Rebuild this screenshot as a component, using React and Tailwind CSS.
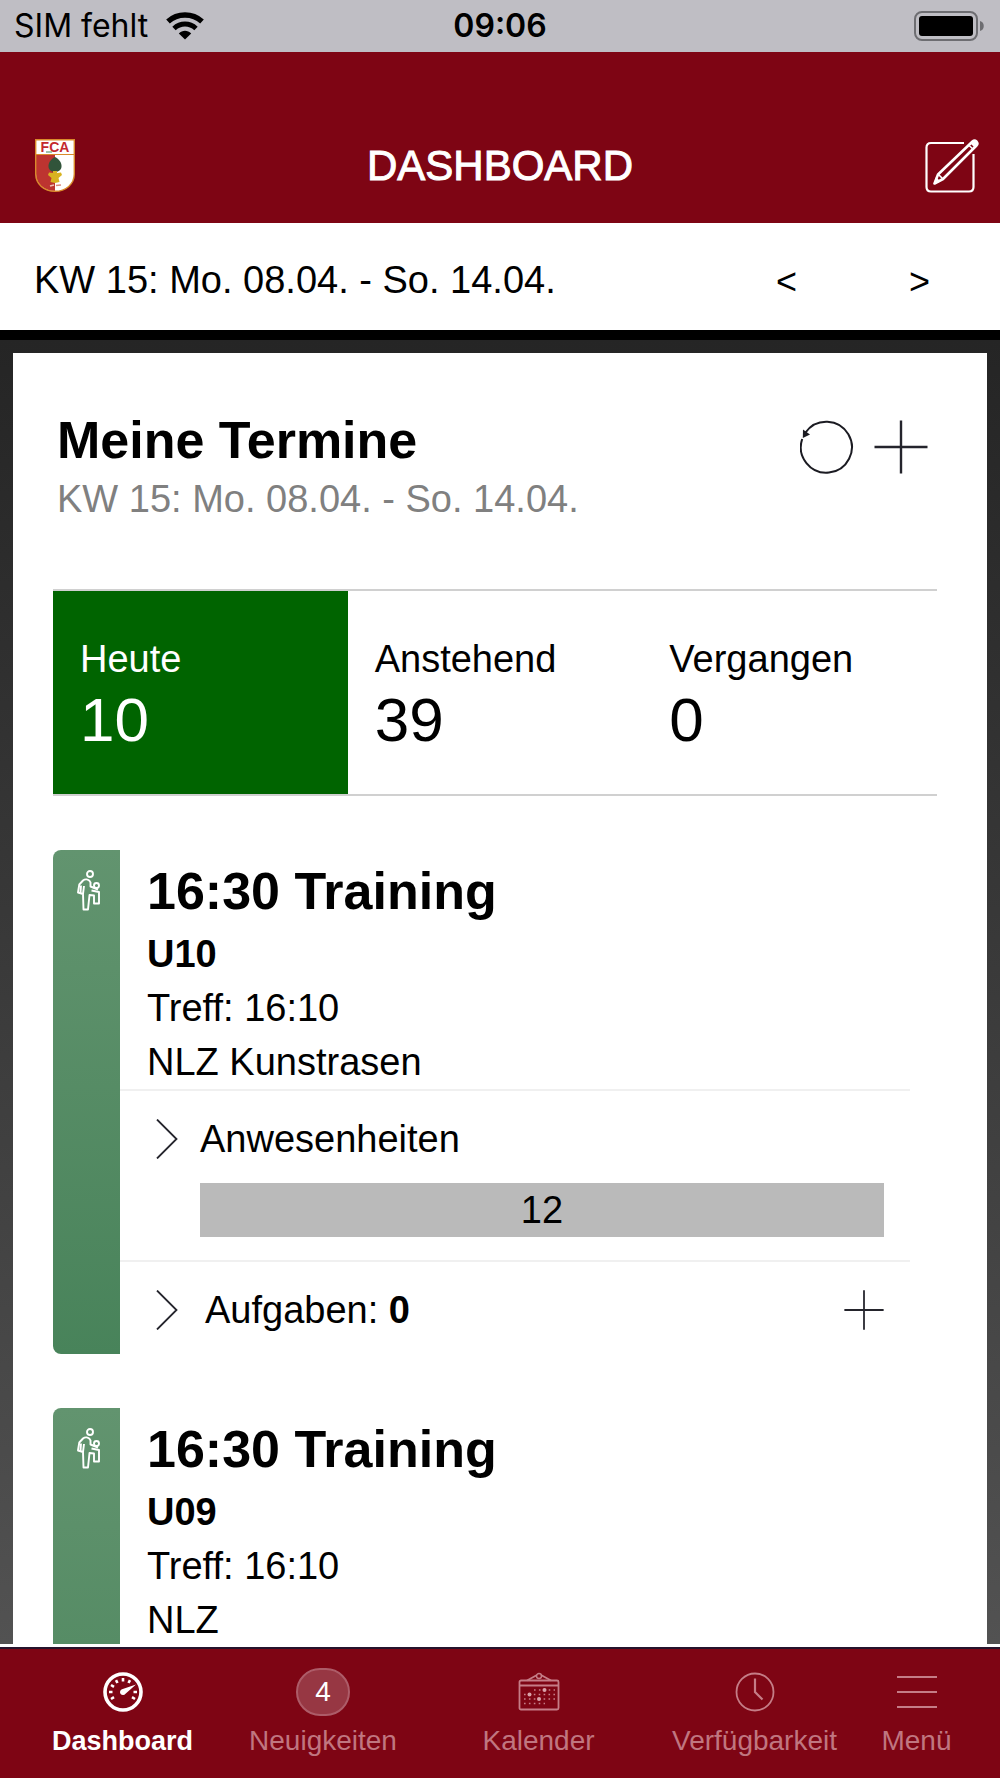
import React, { useState } from 'react'

const WEEK = 'KW 15: Mo. 08.04. - So. 14.04.'

const TABS = [
  { label: 'Heute', count: 10 },
  { label: 'Anstehend', count: 39 },
  { label: 'Vergangen', count: 0 },
]

const EVENTS = [
  { id: 1, title: '16:30 Training', team: 'U10', meet: 'Treff: 16:10', place: 'NLZ Kunstrasen', attendance: 12, tasks: 0 },
  { id: 2, title: '16:30 Training', team: 'U09', meet: 'Treff: 16:10', place: 'NLZ' },
]

function WifiIcon(){
  return (
    <svg viewBox="0 0 38 28" className="w-[38px] h-7" fill="none" stroke="#000" aria-hidden="true">
      <path d="M2 9.500C11.500 .8 26.500 .8 36 9.500" strokeWidth="5.400" />
      <path d="M8 16.500C14.500 10.600 23.500 10.600 30 16.500" strokeWidth="5" />
      <path d="M12.800 21.500C16.500 17.800 21.500 17.800 25.200 21.500L19 27.500Z" fill="#000" stroke="none" />
    </svg>
  )
}

function BatteryIcon(){
  return (
    <svg viewBox="0 0 72 30" className="w-[72px] h-[30px]" aria-hidden="true">
      <rect x="1" y="1" width="62" height="28" rx="7" fill="none" stroke="#6d6d71" strokeWidth="2" />
      <rect x="5" y="5" width="54" height="20" rx="3" fill="#000" />
      <path d="M66 10C71 11 71 19 66 20Z" fill="#6d6d71" />
    </svg>
  )
}

function ClubLogo(){
  return (
    <svg viewBox="0 0 40 53" className="w-10 h-[53px]" role="img" aria-label="FCA">
      <path d="M.7.7H39.300V35C39.300 45 31 52.300 20 52.300S.7 45 .7 35Z" fill="#fff" />
      <path d="M1 16H20V52C9 52 1 45 1 35Z" fill="#bd3430" />
      <path d="M.7.7H39.300V35C39.300 45 31 52.300 20 52.300S.7 45 .7 35Z" fill="none" stroke="#d98a2b" strokeWidth="1.400" />
      <path d="M1 15.500H39" stroke="#d98a2b" strokeWidth="1.200" />
      <text x="20" y="13.200" textAnchor="middle" fontFamily="Liberation Sans, sans-serif" fontWeight="700" fontSize="14" fill="#c42a2e">FCA</text>
      <path d="M11 13H17" stroke="#3d8a5c" strokeWidth="1" />
      <path d="M20 18C24 20 27 24 26.500 28C26 31.500 23 33 20 33S14 31.500 13.500 28C13 24 16 20 20 18Z" fill="#31543a" />
      <path d="M18 32H22V34L26 33.500L27 36L23.500 39L24.500 43L20 44L15.500 43L16.500 39L13 36L14 33.500L18 34Z" fill="#d8b321" />
      <path d="M15 47L19 46" stroke="#f0c0b8" strokeWidth="1.500" />
      <path d="M21 46.500L26 46" stroke="#d98a7b" strokeWidth="1.500" />
    </svg>
  )
}

function EditIcon(){
  return (
    <svg viewBox="0 0 54 54" className="w-[54px] h-[54px]" fill="none" stroke="#fff" strokeWidth="2.200" strokeLinejoin="round" aria-hidden="true">
      <path d="M39 4H6Q1.500 4 1.500 8.500V48Q1.500 52.500 6 52.500H44Q48.500 52.500 48.500 48V15" />
      <path d="M9.500 44.500L13 35.500L47.500 2.500Q49.500.8 51.500 2.500Q53.300 4.500 51.500 6.500L18 40Z" strokeWidth="2.600" />
      <path d="M13.500 35.500L18 40M43.500 6L48.500 10.500" strokeWidth="1.600" />
      <path d="M8.500 45.500L11 38L15.500 42.500Z" fill="#fff" stroke="none" />
      <path d="M45.500 4.500L50 1L53 4L49.500 8.500Z" fill="#fff" stroke="none" />
    </svg>
  )
}

function RefreshIcon(){
  return (
    <svg viewBox="0 0 54 54" className="w-[54px] h-[54px]" aria-hidden="true">
      <path d="M5.500 12.500A25.500 25.500 0 1 1 2.200 19" fill="none" stroke="#1b1b22" strokeWidth="2" />
      <path d="M3 9.500L10 14.500L2.800 18Z" fill="#1b1b22" />
    </svg>
  )
}

function PlusIcon({ className }){
  return (
    <svg viewBox="0 0 54 54" className={className} stroke="#24242c" strokeWidth="2.400" aria-hidden="true">
      <path d="M27 .5V53.500M.5 27H53.500" />
    </svg>
  )
}

function ChevronIcon(){
  return (
    <svg viewBox="0 0 22 40" className="w-[22px] h-10" fill="none" stroke="#24242c" strokeWidth="1.800" aria-hidden="true">
      <path d="M1 .5L20.500 20L1 39.500" />
    </svg>
  )
}

function PlayerIcon(){
  return (
    <svg viewBox="0 0 25 42" className="w-[25px] h-[42px]" fill="none" stroke="#fff" strokeWidth="1.900" strokeLinejoin="round" aria-hidden="true">
      <circle cx="14" cy="5" r="3" />
      <circle cx="20.500" cy="16.500" r="2.500" />
      <path d="M14.500 13C12.500 9.800 9 9.800 7 11.500L3.300 15.500L2 23.500L7 25L7.500 40.500H12L13.500 26L18 26.500V34.500H23V23L15.500 21.500" />
      <path d="M14.500 13L14.500 17.500L22 20.500M5 16.500L4.500 24M8 17L7 25" />
    </svg>
  )
}

function GaugeIcon(){
  return (
    <svg viewBox="0 0 40 40" className="w-10 h-10" fill="none" stroke="#fff" aria-hidden="true">
      <circle cx="20" cy="20" r="18" strokeWidth="3.600" />
      <path d="M20 6V9.500M13 8.200L14.500 11M27 8.200L25.500 11M8 13L11 14.800M6 20H9.500M30.500 20H34M8 27L11 25.200M32 27L29 25.200" strokeWidth="2.600" />
      <path d="M33 12.500L22.500 21.800A3 3 0 1 1 19 17.300Z" fill="#fff" stroke="none" />
    </svg>
  )
}

function CalendarIcon(){
  // [y, start, end] of each dotted row of days
  const rows = [[18, 16, 37], [22.500, 6, 37], [27, 6, 37], [31.500, 6, 27]]
  return (
    <svg viewBox="0 0 42 40" className="w-[42px] h-10" fill="none" stroke="#c57d87" strokeWidth="1.800" aria-hidden="true">
      <rect x="1.500" y="8.500" width="39" height="29" rx="1.500" />
      <path d="M1.500 13.500H40.500M9 8.500L19 3M33 8.500L23 3" />
      <circle cx="21" cy="4" r="2.500" strokeWidth="1.400" />
      {rows.map(([y, from, to])=> (
        <path key={y} d={`M${from} ${y}H${to}`} strokeWidth="1.600" strokeDasharray="1.600 3.300" />
      ))}
      <g fill="#d9a3aa" stroke="none">
        <circle cx="26.500" cy="18" r="2" />
        <circle cx="11.500" cy="22.500" r="2" />
        <circle cx="21" cy="27" r="2" />
      </g>
    </svg>
  )
}

function ClockIcon(){
  return (
    <svg viewBox="0 0 40 40" className="w-10 h-10" fill="none" stroke="#c57d87" strokeWidth="1.800" aria-hidden="true">
      <circle cx="20" cy="20" r="18.500" />
      <path d="M20 6.500V20L27.500 27.500" strokeWidth="2.200" />
    </svg>
  )
}

function MenuIcon(){
  return (
    <svg viewBox="0 0 40 40" className="w-10 h-10" stroke="#c57d87" strokeWidth="2.200" aria-hidden="true">
      <path d="M0 5H40M0 20H40M0 35H40" />
    </svg>
  )
}

function NavItem({ label, active, children }){
  return (
    <a href="#" className="flex flex-col items-center" aria-current={active ? 'page' : undefined}>
      <span className="h-12 flex items-center justify-center">{children}</span>
      <span className={active
        ? 'mt-[7px] text-[27px] leading-9 font-bold text-white'
        : 'mt-[7px] text-[28px] leading-9 text-[#c07680]'}>{label}</span>
    </a>
  )
}

function EventCard({ event }){
  const hasDetails = event.attendance !== undefined
  return (
    <article className="flex shrink-0 min-h-[504px] mr-[27px]">
      <div className="w-[67px] shrink-0 rounded-l-lg bg-linear-to-b from-[#62946f] to-[#48835a] flex justify-center items-start pt-[19px] pl-1">
        <PlayerIcon />
      </div>
      <div className="flex-1 pt-[5px] text-[38px] leading-[54px]">
        <div className="pl-[27px]">
          <h3 className="text-[52px] leading-[72px] font-bold">{event.title}</h3>
          <p className="font-bold">{event.team}</p>
          <p>{event.meet}</p>
          <p>{event.place}</p>
        </div>
        {hasDetails && (
          <>
            <div className="border-t-2 border-[#f0f0f0] pt-[21px] pb-[23px] pl-9 pr-[26px]">
              <button className="flex items-center gap-[22px]">
                <ChevronIcon />
                Anwesenheiten
              </button>
              <div className="mt-[17px] ml-11 bg-[#bababa] text-center">{event.attendance}</div>
            </div>
            <div className="border-t-2 border-[#f0f0f0] pt-[21px] pb-4 pl-9 pr-[26px] flex items-center justify-between">
              <button className="flex items-center gap-[27px]">
                <ChevronIcon />
                <span>Aufgaben: <b>{event.tasks}</b></span>
              </button>
              <button aria-label="Aufgabe hinzufügen"><PlusIcon className="w-10 h-10" /></button>
            </div>
          </>
        )}
      </div>
    </article>
  )
}

export default function App(){
  const [tab, setTab] = useState(0)

  return (
    <div className="h-screen flex flex-col bg-white text-black font-['Liberation_Sans',Arial,sans-serif]">
      <div className="h-[52px] shrink-0 bg-[#bfbec4] px-[14px] grid grid-cols-[1fr_auto_1fr] items-center font-[Inter,sans-serif] text-[32px]">
        <div className="flex items-center gap-[18px]">
          <span>SIM fehlt</span>
          <WifiIcon />
        </div>
        <span className="font-semibold">09:06</span>
        <div className="flex justify-end"><BatteryIcon /></div>
      </div>

      <header className="h-[171px] shrink-0 bg-[#7e0514] pt-14 px-[21px] grid grid-cols-[1fr_auto_1fr] items-center">
        <div className="pl-[14px]"><ClubLogo /></div>
        <h1 className="text-[42px] leading-[48px] text-white [-webkit-text-stroke:1px_#fff]">DASHBOARD</h1>
        <button className="justify-self-end" aria-label="Bearbeiten"><EditIcon /></button>
      </header>

      <div className="shrink-0 pt-[30px] pb-[23px] pl-[34px] pr-[14px] flex text-[38px] leading-[54px]">
        <span className="flex-1">{WEEK}</span>
        <button className="w-[133px] pt-1 text-[36px] leading-[50px]" aria-label="Vorherige Woche">&lt;</button>
        <button className="w-[133px] pt-1 text-[36px] leading-[50px]" aria-label="Nächste Woche">&gt;</button>
      </div>

      <main className="flex-1 min-h-0 overflow-hidden mb-[3px] border-t-[10px] border-black bg-linear-to-b from-[#252525] to-[#525252] pt-[13px] px-[13px] flex flex-col">
        <section className="flex-1 min-h-0 bg-white pt-[55px] pl-10 pr-[50px] flex flex-col">
          <div className="flex items-start justify-between">
            <div className="pl-1">
              <h2 className="text-[52px] leading-[64px] font-bold">Meine Termine</h2>
              <p className="text-[38px] leading-[54px] text-[#808080]">{WEEK}</p>
            </div>
            <div className="flex gap-5 mt-3 mr-[9px]">
              <button aria-label="Aktualisieren"><RefreshIcon /></button>
              <button aria-label="Termin hinzufügen"><PlusIcon className="w-[54px] h-[54px]" /></button>
            </div>
          </div>

          <div className="mt-[63px] border-y-2 border-[#d0d0d0] grid grid-cols-3">
            {TABS.map((t, i)=> (
              <button
                key={t.label}
                onClick={()=>setTab(i)}
                className={i === tab
                  ? 'pt-[41px] pb-10 pl-[27px] text-left bg-[#006400] text-white'
                  : 'pt-[41px] pb-10 pl-[27px] text-left'}
              >
                <span className="block text-[38px] leading-[54px]">{t.label}</span>
                <span className="block text-[62px] leading-[68px]">{t.count}</span>
              </button>
            ))}
          </div>

          <div className="mt-[54px] flex-1 min-h-0 flex flex-col gap-[54px]">
            {EVENTS.map((e)=> <EventCard key={e.id} event={e} />)}
          </div>
        </section>
      </main>

      <nav className="shrink-0 border-t-2 border-[#26142c] bg-[#7e0514] pt-[19px] pb-[19px] px-6 grid grid-cols-[197fr_204fr_227fr_205fr_119fr]">
        <NavItem label="Dashboard" active><GaugeIcon /></NavItem>
        <NavItem label="Neuigkeiten">
          <span className="w-[54px] h-12 rounded-[24px] border-2 border-[#ad5c68] bg-[#973743] text-white text-[28px] flex items-center justify-center">4</span>
        </NavItem>
        <NavItem label="Kalender"><CalendarIcon /></NavItem>
        <NavItem label="Verfügbarkeit"><ClockIcon /></NavItem>
        <NavItem label="Menü"><MenuIcon /></NavItem>
      </nav>
    </div>
  )
}
